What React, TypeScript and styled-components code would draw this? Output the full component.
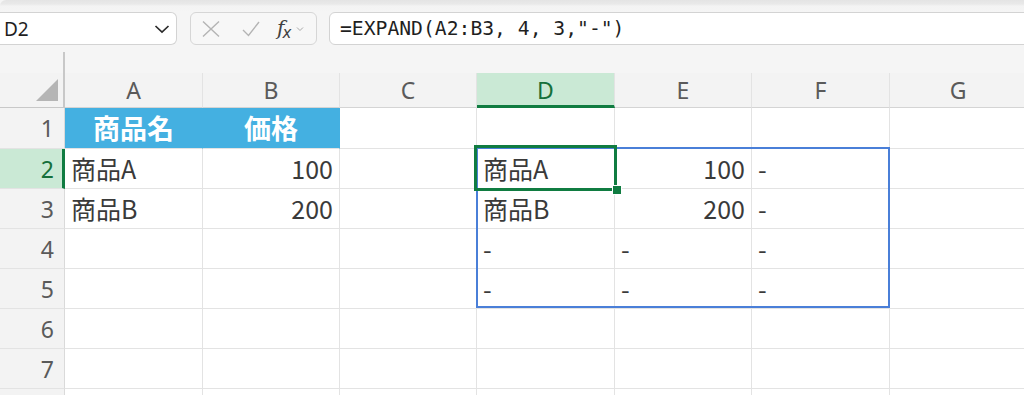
import styled, { createGlobalStyle, css } from "styled-components";

const GlobalStyle = createGlobalStyle`
  html, body {
    margin: 0;
    padding: 0;
    background: #f5f5f5;
    overflow: hidden;
  }
`;

const COLS = ["A", "B", "C", "D", "E", "F", "G"];
const COL_WIDTHS = [138, 137, 137, 138, 137, 138, 137];
// the 8th row only peeks in at the bottom edge, so its number stays hidden
const ROW_HEIGHTS = [41, 40, 40, 40, 40, 40, 40, 40];
const VISIBLE_ROW_LABELS = 7;

type CellData = { text: string; align?: "left" | "right"; header?: boolean };

const data: Record<string, CellData> = {
  A1: { text: "商品名", header: true },
  B1: { text: "価格", header: true },
  A2: { text: "商品A" },
  B2: { text: "100", align: "right" },
  A3: { text: "商品B" },
  B3: { text: "200", align: "right" },
  D2: { text: "商品A" },
  E2: { text: "100", align: "right" },
  F2: { text: "-" },
  D3: { text: "商品B" },
  E3: { text: "200", align: "right" },
  F3: { text: "-" },
  D4: { text: "-" },
  E4: { text: "-" },
  F4: { text: "-" },
  D5: { text: "-" },
  E5: { text: "-" },
  F5: { text: "-" },
};

const Page = styled.div`
  width: 1024px;
  height: 395px;
  overflow: hidden;
  background: #f5f5f5;
  display: flex;
  flex-direction: column;
`;

const TopStrip = styled.div`
  height: 12px;
  flex-shrink: 0;
  background: linear-gradient(#e4e4e4 0, #e9e9e9 4px, #f3f3f3 6px, #f5f5f5 12px);
  border-top-left-radius: 6px;
`;

const FormulaBar = styled.div`
  height: 33px;
  display: flex;
  align-items: stretch;
  flex-shrink: 0;
`;

const NameBox = styled.div`
  width: 177px;
  box-sizing: border-box;
  background: #fff;
  border: 1px solid #d3d3d3;
  border-left: none;
  border-radius: 0 6px 6px 0;
  display: flex;
  align-items: center;
  justify-content: space-between;
  padding: 0 6px 0 4px;
  font-family: "Noto Sans", "Liberation Sans", sans-serif;
  font-size: 19px;
  color: #1f1f1f;
`;

const FxGroup = styled.div`
  width: 127px;
  margin-left: 13px;
  box-sizing: border-box;
  background: #f7f7f7;
  border: 1px solid #d6d6d6;
  border-radius: 6px;
  display: flex;
  align-items: center;
  padding: 0 0 0 11px;
`;

const FxLabel = styled.span`
  font-family: "DejaVu Serif", "Liberation Serif", serif;
  font-style: italic;
  font-size: 20px;
  color: #404040;
  margin-left: 17px;
  letter-spacing: -2px;

  sub {
    font-size: 15px;
    vertical-align: -3px;
    font-family: "DejaVu Sans", sans-serif;
    font-style: italic;
  }
`;

const FormulaInput = styled.div`
  flex: 1;
  margin-left: 12px;
  margin-right: -10px;
  box-sizing: border-box;
  background: #fff;
  border: 1px solid #d3d3d3;
  border-radius: 6px;
  display: flex;
  align-items: center;
  padding-left: 10px;
  font-family: "DejaVu Sans Mono", "Liberation Mono", monospace;
  font-size: 19.7px;
  color: #1f1f1f;
  white-space: pre;
`;

const GapRow = styled.div`
  height: 28px;
  flex-shrink: 0;
  display: flex;
  align-items: flex-end;
`;

const CornerStub = styled.div`
  width: 65px;
  height: 21px;
  box-sizing: border-box;
  border-right: 2px solid #c8c8c8;
`;

const GridWrap = styled.div`
  position: relative;
  flex: 1;
`;

const Grid = styled.div`
  display: grid;
  grid-template-columns: 65px ${COL_WIDTHS.map((w) => `${w}px`).join(" ")};
  grid-template-rows: 35px ${ROW_HEIGHTS.map((h) => `${h}px`).join(" ")};
`;

const Corner = styled.div`
  box-sizing: border-box;
  background: #f3f3f3;
  border-right: 2px solid #c8c8c8;
  border-bottom: 1px solid #c8c8c8;
  display: flex;
  align-items: flex-end;
  justify-content: flex-end;
  padding: 0 5px 6px 0;
`;

const CornerTriangle = styled.div`
  width: 22px;
  height: 22px;
  background: #b5b5b5;
  clip-path: polygon(100% 0, 100% 100%, 0 100%);
`;

const headerFont = css`
  font-family: "Noto Sans", "Open Sans", sans-serif;
  font-size: 23px;
`;

const ColHeader = styled.div<{ $active?: boolean }>`
  ${headerFont};
  box-sizing: border-box;
  background: ${(p) => (p.$active ? "#cae9d5" : "#f3f3f3")};
  color: ${(p) => (p.$active ? "#16703b" : "#5a5a5a")};
  border-right: 1px solid #e3e3e3;
  border-bottom: ${(p) => (p.$active ? "3px solid #107c41" : "1px solid #d4d4d4")};
  display: flex;
  align-items: center;
  justify-content: center;
  padding-top: ${(p) => (p.$active ? "2px" : "0")};
`;

const RowHeader = styled.div<{ $active?: boolean }>`
  ${headerFont};
  box-sizing: border-box;
  background: ${(p) => (p.$active ? "#cae9d5" : "#f3f3f3")};
  color: ${(p) => (p.$active ? "#16703b" : "#5a5a5a")};
  border-bottom: 1px solid #e3e3e3;
  border-right: ${(p) => (p.$active ? "3px solid #107c41" : "1px solid #dadada")};
  display: flex;
  align-items: center;
  justify-content: flex-end;
  padding-right: ${(p) => (p.$active ? "8px" : "10px")};
`;

const Cell = styled.div<{ $align?: "left" | "right"; $header?: boolean }>`
  box-sizing: border-box;
  background: ${(p) => (p.$header ? "#44b0e1" : "#fff")};
  color: ${(p) => (p.$header ? "#fff" : "#3a3a3a")};
  border-right: 1px solid ${(p) => (p.$header ? "#44b0e1" : "#e3e3e3")};
  border-bottom: 1px solid #e3e3e3;
  display: flex;
  align-items: center;
  justify-content: ${(p) =>
    p.$header ? "center" : p.$align === "right" ? "flex-end" : "flex-start"};
  padding: 0 6px 1px 6px;
  font-family: "Noto Sans CJK JP", "Noto Sans", sans-serif;
  font-size: ${(p) => (p.$header ? "27px" : "25px")};
  font-weight: ${(p) => (p.$header ? 700 : 400)};
  white-space: nowrap;
  overflow: hidden;
`;

const RangeBox = styled.div`
  position: absolute;
  left: 476px;
  top: 74px;
  width: 414px;
  height: 161px;
  box-sizing: border-box;
  border: 2px solid #4a7fd8;
  pointer-events: none;
`;

const Selection = styled.div`
  position: absolute;
  left: 474px;
  top: 72px;
  width: 143px;
  height: 46px;
  box-sizing: border-box;
  border: 3px solid #107c41;
  pointer-events: none;
`;

const FillHandle = styled.div`
  position: absolute;
  right: -7px;
  bottom: -6px;
  width: 8px;
  height: 8px;
  background: #107c41;
  outline: 1px solid #fff;
`;

export default function App() {
  return (
    <>
      <GlobalStyle />
      <Page>
        <TopStrip />
        <FormulaBar>
          <NameBox>
            <span>D2</span>
            <svg width="16" height="10" viewBox="0 0 16 10">
              <path d="M1.5 2 L8 8 L14.5 2" fill="none" stroke="#2b2b2b" strokeWidth="1.7" />
            </svg>
          </NameBox>
          <FxGroup>
            <svg width="18" height="16" viewBox="0 0 18 16">
              <path d="M1 0.5 L17 15.5 M17 0.5 L1 15.5" stroke="#b4b4b4" strokeWidth="1.4" fill="none" />
            </svg>
            <svg width="18" height="16" viewBox="0 0 18 16" style={{ marginLeft: 22 }}>
              <path d="M1 9 L6.5 14.5 L17 1" stroke="#b4b4b4" strokeWidth="1.4" fill="none" />
            </svg>
            <FxLabel>
              f<sub>x</sub>
            </FxLabel>
            <svg width="8" height="6" viewBox="0 0 8 6" style={{ marginLeft: 7 }}>
              <path d="M1 1.5 L4 4.5 L7 1.5" stroke="#a8a8a8" strokeWidth="1" fill="none" />
            </svg>
          </FxGroup>
          <FormulaInput>=EXPAND(A2:B3, 4, 3,"-")</FormulaInput>
        </FormulaBar>
        <GapRow>
          <CornerStub />
        </GapRow>
        <GridWrap>
          <Grid>
            <Corner>
              <CornerTriangle />
            </Corner>
            {COLS.map((c) => (
              <ColHeader key={c} $active={c === "D"}>
                {c}
              </ColHeader>
            ))}
            {ROW_HEIGHTS.map((_, i) => {
              const r = i + 1;
              return [
                <RowHeader key={`r${r}`} $active={r === 2}>
                  {r <= VISIBLE_ROW_LABELS ? r : ""}
                </RowHeader>,
                ...COLS.map((c) => {
                  const cell = data[`${c}${r}`];
                  return (
                    <Cell key={`${c}${r}`} $align={cell?.align} $header={cell?.header}>
                      {cell?.text}
                    </Cell>
                  );
                }),
              ];
            })}
          </Grid>
          <RangeBox />
          <Selection>
            <FillHandle />
          </Selection>
        </GridWrap>
      </Page>
    </>
  );
}
